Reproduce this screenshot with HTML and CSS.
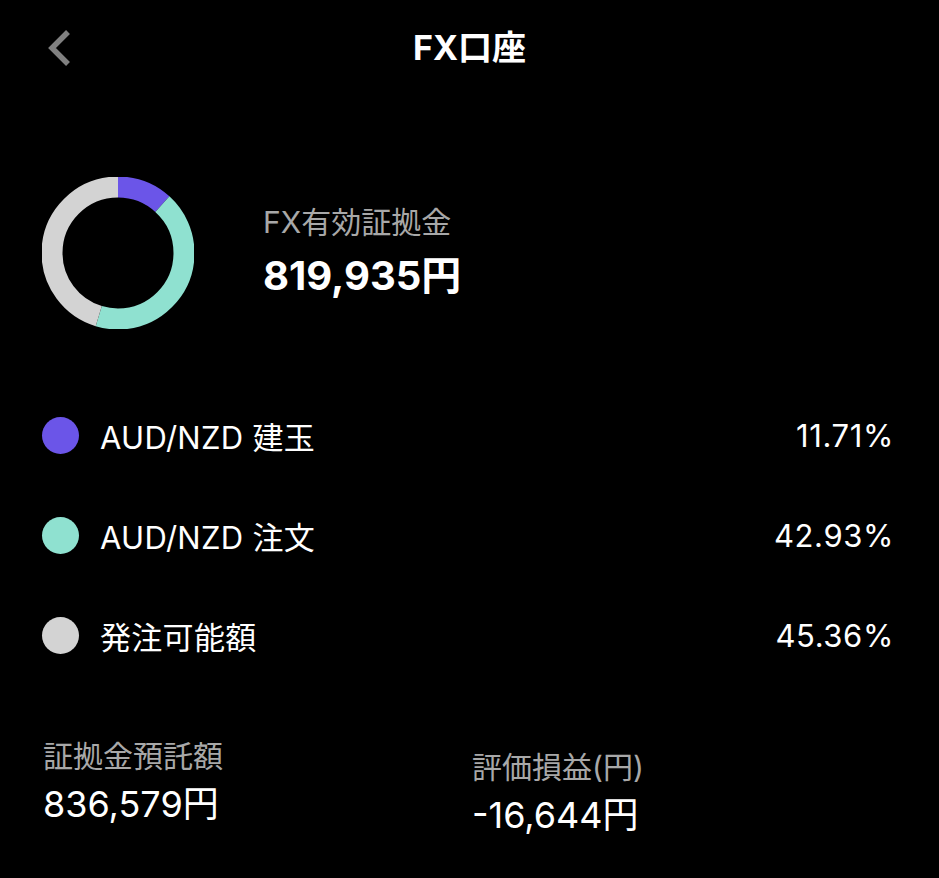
FILE: index.html
```html
<!DOCTYPE html>
<html lang="ja">
<head>
<meta charset="utf-8">
<title>FX口座</title>
<link rel="stylesheet" href="styles.css">
</head>
<body>
<div class="screen">
  <header class="header">
    <div class="back">
      <svg width="26" height="38" viewBox="0 0 26 38"><path d="M22 3 L6 19 L22 35" fill="none" stroke="#808080" stroke-width="5.5" stroke-linecap="butt" stroke-linejoin="miter"/></svg>
    </div>
    <h1 class="title">FX口座</h1>
    <div></div>
  </header>

  <section class="summary">
    <svg class="donut" width="152" height="152" viewBox="0 0 152 152">
      <g transform="rotate(-90 76 76)">
        <circle cx="76" cy="76" r="66" fill="none" stroke="#6b55e8" stroke-width="21" stroke-dasharray="48.56 414.69" stroke-dashoffset="0"/>
        <circle cx="76" cy="76" r="66" fill="none" stroke="#8fe1d0" stroke-width="21" stroke-dasharray="178.03 414.69" stroke-dashoffset="-48.56"/>
        <circle cx="76" cy="76" r="66" fill="none" stroke="#d3d3d3" stroke-width="21" stroke-dasharray="188.10 414.69" stroke-dashoffset="-226.59"/>
      </g>
    </svg>
    <div class="summary-text">
      <div class="summary-label">FX有効証拠金</div>
      <div class="summary-value">819,935円</div>
    </div>
  </section>

  <ul class="legend">
    <li class="legend-row"><span class="dot dot-purple"></span><span class="legend-name">AUD/NZD 建玉</span><span class="legend-pct">11.71%</span></li>
    <li class="legend-row"><span class="dot dot-teal"></span><span class="legend-name">AUD/NZD 注文</span><span class="legend-pct">42.93%</span></li>
    <li class="legend-row"><span class="dot dot-grey"></span><span class="legend-name">発注可能額</span><span class="legend-pct">45.36%</span></li>
  </ul>

  <section class="stats">
    <div class="stat">
      <div class="stat-label">証拠金預託額</div>
      <div class="stat-value">836,579円</div>
    </div>
    <div class="stat stat-right">
      <div class="stat-label">評価損益(円)</div>
      <div class="stat-value">-16,644円</div>
    </div>
  </section>
</div>
</body>
</html>
```

FILE: styles.css
```css
* { box-sizing: border-box; }
html, body {
  margin: 0;
  padding: 0;
  background: #000;
}
body {
  font-family: Inter, "Noto Sans CJK JP", sans-serif;
  color: #fff;
}
.screen {
  width: 939px;
  height: 878px;
  overflow: hidden;
}
.header {
  height: 96px;
  display: grid;
  grid-template-columns: 1fr auto 1fr;
  align-items: center;
  padding: 0 46px;
}
.back {
  display: flex;
  align-items: center;
  height: 40px;
}
.back svg { display: block; }
.title {
  margin: 0;
  font-size: 34px;
  font-weight: 700;
  line-height: 40px;
  color: #fff;
}
.summary {
  display: flex;
  align-items: center;
  gap: 69px;
  padding: 81px 0 0 42px;
}
.donut { display: block; flex: none; }
.summary-text {
  display: flex;
  flex-direction: column;
  gap: 14px;
  margin-top: -4px;
}
.summary-label {
  font-size: 30px;
  line-height: 36px;
  color: #a8a8a8;
}
.summary-value {
  font-size: 40px;
  line-height: 44px;
  font-weight: 700;
  color: #fff;
}
.legend {
  list-style: none;
  margin: 56px 0 0 0;
  padding: 0 45px 0 42px;
}
.legend-row {
  height: 100px;
  display: flex;
  align-items: center;
}
.dot {
  width: 37px;
  height: 37px;
  border-radius: 50%;
  flex: none;
  margin-right: 21px;
}
.dot-purple { background: #6b55e8; }
.dot-teal { background: #8fe1d0; }
.dot-grey { background: #d3d3d3; }
.legend-name {
  font-size: 31px;
  letter-spacing: 0.3px;
  color: #fff;
  flex: 1;
}
.legend-pct {
  font-size: 31px;
  letter-spacing: 0.6px;
  color: #fff;
}
.stats {
  display: grid;
  grid-template-columns: 429px 1fr;
  padding: 52px 0 0 43px;
}
.stat {
  display: flex;
  flex-direction: column;
  gap: 8px;
}
.stat-right { margin-top: 11px; }
.stat-label {
  font-size: 30px;
  line-height: 38px;
  color: #a8a8a8;
}
.stat-value {
  font-size: 36px;
  line-height: 42px;
  color: #fff;
}
```
